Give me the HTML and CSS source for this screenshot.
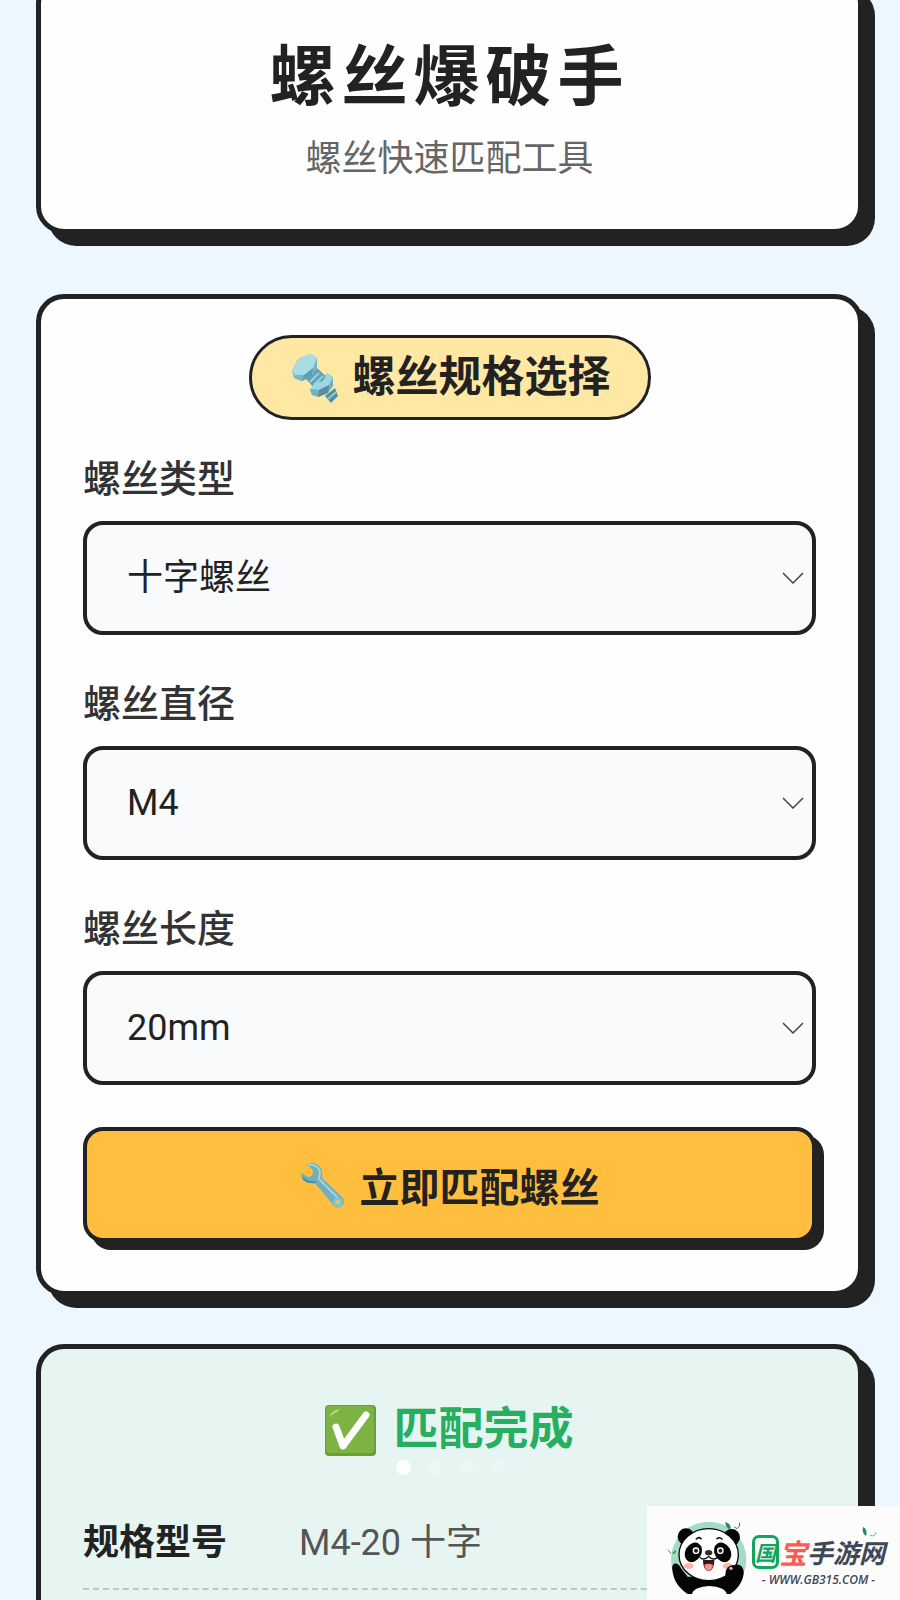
FILE: index.html
```html
<!DOCTYPE html>
<html lang="zh-CN">
<head>
<meta charset="UTF-8">
<meta name="viewport" content="width=device-width, initial-scale=1.0">
<title>螺丝爆破手</title>
<link rel="stylesheet" href="styles.css">
</head>
<body>
<div class="page">
	<header class="card header">
		<h1>螺丝爆破手</h1>
		<p class="subtitle">螺丝快速匹配工具</p>
	</header>

	<form class="card picker">
		<h2 class="pill">
			<svg class="icon-bolt" viewBox="0 0 54 54" aria-hidden="true">
				<path d="M20 28 31 17 41 26 29 38z" fill="#5fa3b5"/>
				<path d="M24 31l9-9M28 34l9-9" stroke="#9ad0dc" stroke-width="2"/>
				<path d="M39 45 49 37 52 45 45 52z" fill="#4a92a5"/>
				<path d="M42 48l8-7" stroke="#8cc8d5" stroke-width="2"/>
				<path d="M6 20 12 8 24 3 31 7 31 17 25 26 15 30 8 27z" fill="#78b5c6"/>
				<path d="M6 20 12 8 24 3 31 7 27 17 18 24 9 24z" fill="#a9dce5"/>
				<path d="M18 24 27 17 26 25 16 30z" fill="#5c9fb2"/>
				<path d="M24 39 29 33 38 30 41 22 47 26 47 35 42 42 32 46 26 44z" fill="#70afc0"/>
				<path d="M24 38 29 32 37 30 41 22 47 26 43 34 33 39z" fill="#9fd7e1"/>
				<path d="M33 39 43 34 42 42 32 46z" fill="#558fa3"/>
			</svg>
			<span>螺丝规格选择</span>
		</h2>

		<div class="field">
			<label for="type">螺丝类型</label>
			<div class="select-box">
				<select id="type">
					<option>十字螺丝</option>
				</select>
				<svg class="arrow" viewBox="0 0 22 12" aria-hidden="true"><path d="M1 1l10 10L21 1"/></svg>
			</div>
		</div>
		<div class="field">
			<label for="diameter">螺丝直径</label>
			<div class="select-box">
				<select id="diameter">
					<option>M4</option>
				</select>
				<svg class="arrow" viewBox="0 0 22 12" aria-hidden="true"><path d="M1 1l10 10L21 1"/></svg>
			</div>
		</div>
		<div class="field">
			<label for="length">螺丝长度</label>
			<div class="select-box">
				<select id="length">
					<option>20mm</option>
				</select>
				<svg class="arrow" viewBox="0 0 22 12" aria-hidden="true"><path d="M1 1l10 10L21 1"/></svg>
			</div>
		</div>

		<button type="button" class="match-btn">
			<svg class="icon-wrench" viewBox="0 0 48 48" aria-hidden="true">
				<path d="M6 4C11 1 18 2 21 7C23 11 22 14 22 17L42 36A6 6 0 0 1 34 45L15 22C10 23 5 22 2 18C1 16 1 14 2 12L8 16C11 16 13 14 13 11C13 8 10 6 6 4z" fill="#6fb0bf"/>
				<path d="M8 4c6-1 11 2 12 7l-1 7 20 20" fill="none" stroke="#a5d4d8" stroke-width="2"/>
				<path d="M3 17c4 4 8 5 13 4" fill="none" stroke="#4a8fa6" stroke-width="2"/>
				<circle cx="38" cy="41" r="5" fill="#8dc0c6"/>
				<circle cx="38" cy="41" r="2" fill="#efc258"/>
			</svg>
			<span>立即匹配螺丝</span>
		</button>
	</form>

	<section class="card result">
		<h2 class="done">
			<svg class="icon-check" viewBox="0 0 51 51" aria-hidden="true">
				<rect width="51" height="51" rx="4" fill="#689f38"/>
				<rect x="1" y="1" width="48" height="47" rx="3" fill="#7cb342"/>
				<path d="M5 12c1-5 4-7 10-8l-3 3c-3 1-5 3-7 5z" fill="#b5d98c"/>
				<path d="M11 22L18 41L41 10" fill="none" stroke="#fff" stroke-width="7" stroke-linecap="round" stroke-linejoin="round"/>
			</svg>
			<span>匹配完成</span>
			<span class="dots"><i class="dot on"></i><i class="dot"></i><i class="dot"></i><i class="dot"></i></span>
		</h2>
		<dl class="row">
			<dt>规格型号</dt>
			<dd>M4-20 十字</dd>
		</dl>
	</section>
</div>

<aside class="site">
	<svg class="panda" viewBox="0 0 240 222" aria-hidden="true">
		<circle cx="125" cy="118" r="113" fill="#a3dcc2"/>
		<path d="M16 150C12 125 34 125 42 145L62 170H185L200 135C220 128 232 142 230 162C226 190 208 210 190 222H62C36 204 20 184 16 150z" fill="#050505"/>
		<circle cx="57" cy="50" r="25" fill="#050505"/>
		<circle cx="194" cy="52" r="25" fill="#050505"/>
		<ellipse cx="125" cy="104" rx="89" ry="78" fill="#fff" stroke="#050505" stroke-width="4"/>
		<ellipse cx="79" cy="97" rx="24" ry="31" transform="rotate(30 79 97)" fill="#050505"/>
		<ellipse cx="167" cy="97" rx="24" ry="31" transform="rotate(-30 167 97)" fill="#050505"/>
		<circle cx="87" cy="92" r="10" fill="#fff"/><circle cx="87" cy="92" r="6" fill="#222"/>
		<circle cx="160" cy="92" r="10" fill="#fff"/><circle cx="160" cy="92" r="6" fill="#222"/>
		<path d="M88 57q7-7 14-1M150 56q8-6 15 1" fill="none" stroke="#111" stroke-width="5" stroke-linecap="round"/>
		<ellipse cx="125" cy="98" rx="11" ry="8" fill="#3b2a2a"/>
		<path d="M100 113q12 10 25-4q12 14 26 4" fill="none" stroke="#111" stroke-width="4" stroke-linecap="round"/>
		<path d="M108 120h34c0 20-7 33-17 33s-17-13-17-33z" fill="#35171a"/>
		<path d="M112 135q13-8 26 0c-2 12-7 17-13 17s-11-5-13-17z" fill="#ff8f86"/>
		<ellipse cx="65" cy="138" rx="15" ry="9" fill="#ffb3a8"/>
		<ellipse cx="182" cy="138" rx="15" ry="9" fill="#ffb3a8"/>
		<ellipse cx="199" cy="161" rx="24" ry="26" fill="#050505"/>
		<circle cx="192" cy="145" r="5" fill="#ffb3a8"/>
		<ellipse cx="127" cy="224" rx="52" ry="26" fill="#fff"/>
		<path d="M175 6c14 5 18 12 14 22c-9-3-14-11-14-22zM14 102l12-12q3 10-12 12z" fill="#1f8a63"/>
		<path d="M202 21l8 5q10-6 8-18M2 90l10 10" fill="none" stroke="#2b7d61" stroke-width="3"/>
	</svg>
	<div class="brand">
		<p class="brand-name"><span class="guo">国</span><span class="bao">宝</span>手游网</p>
		<p class="brand-url">- WWW.GB315.COM -</p>
		<svg class="leaf" viewBox="0 0 15 12" aria-hidden="true">
			<path d="M1 1C5 3 5 7 4 10C1 8 0 5 1 1z" fill="#1f8a63"/>
			<path d="M8 9l3 1q3-1 3-4" fill="none" stroke="#7fb5a0"/>
		</svg>
	</div>
</aside>
</body>
</html>
```
FILE: styles.css
```css
*{
	box-sizing: border-box;
	margin: 0;
	padding: 0;
}
body{
	background-color: #ecf7ff;
	color: #222;
	font-family: Roboto, "Noto Sans CJK SC", sans-serif;
}
.page{
	height: 100vh;
	overflow: hidden;
	padding: 0 37px 0 36px;
}
.card{
	background-color: #fefefe;
	border: 5px solid #222;
	border-radius: 28px;
	box-shadow: 12px 12px 0 #222;
	padding: 36px 42px 49px;
}

/* header */
.header{
	margin-top: -24px;
	margin-bottom: 60px;
	padding: 57px 42px 45px;
	text-align: center;
}
h1{
	font-size: 66px;
	line-height: 80px;
	letter-spacing: 6px;
}
.subtitle{
	margin-top: 16px;
	font-size: 36px;
	line-height: 50px;
	color: #666;
}

/* form */
.picker{
	display: flex;
	flex-direction: column;
	margin-bottom: 48px;
}
.pill{
	display: flex;
	align-items: center;
	align-self: center;
	gap: 13px;
	margin-bottom: 32px;
	padding: 0 37px 0 34px;
	border: 3px solid #222;
	border-radius: 43px;
	background-color: #ffe8a3;
	font-size: 43px;
	line-height: 79px;
}
.icon-bolt{
	width: 54px;
	height: 54px;
}
.field{
	margin-bottom: 42px;
}
.field label{
	display: block;
	margin-bottom: 16px;
	padding-top: 1px;
	font-size: 38px;
	font-weight: 500;
	line-height: 52px;
	color: #333;
}
.select-box{
	position: relative;
}
.select-box select{
	display: block;
	width: 100%;
	height: 114px;
	padding: 0 40px;
	border: 4px solid #222;
	border-radius: 20px;
	background-color: #f9fafc;
	color: #222;
	font-family: inherit;
	font-size: 36px;
	appearance: none;
}
.arrow{
	position: absolute;
	right: 12px;
	top: 51px;
	width: 22px;
	height: 12px;
	fill: none;
	stroke: #444;
	stroke-width: 1.5;
	pointer-events: none;
}
.match-btn{
	display: flex;
	align-items: center;
	justify-content: center;
	gap: 12px;
	height: 115px;
	border: 4px solid #222;
	border-radius: 20px;
	background-color: #ffbe3d;
	box-shadow: 8px 8px 0 #222;
	color: #222;
	font-family: inherit;
	font-size: 40px;
	font-weight: bold;
	cursor: pointer;
}
.icon-wrench{
	width: 48px;
	height: 48px;
}

/* result */
.result{
	min-height: 600px;
	padding-top: 51px;
	background-color: #e6f5f1;
}
.done{
	position: relative;
	display: flex;
	align-items: center;
	justify-content: center;
	gap: 17px;
	font-size: 45px;
	line-height: 60px;
	color: #27ae60;
}
.icon-check{
	width: 51px;
	height: 51px;
}
.dots{
	position: absolute;
	top: 60px;
	left: 50%;
	display: flex;
	gap: 16px;
	margin-left: -54px;
}
.dot{
	width: 15px;
	height: 15px;
	border-radius: 50%;
	background-color: #fff;
	opacity: .2;
}
.dot.on{
	opacity: 1;
}
.row{
	display: flex;
	margin-top: 38px;
	padding: 20px 0;
	border-bottom: 2px dashed #bcc6c3;
	font-size: 36px;
	line-height: 50px;
}
.row dt{
	width: 216px;
	font-weight: bold;
}
.row dd{
	color: #555;
}

/* site badge */
.site{
	position: fixed;
	right: 0;
	bottom: 0;
	display: flex;
	gap: 5px;
	width: 253px;
	height: 94px;
	padding: 14px 0 0 20px;
	background-color: #fcfcfc;
}
.panda{
	width: 80px;
	height: 74px;
}
.brand{
	position: relative;
	padding-top: 14px;
	font-family: "Noto Sans CJK SC", sans-serif;
	font-weight: bold;
	color: #3f4757;
}
.brand-name{
	display: flex;
	align-items: center;
	font-size: 26px;
	font-style: italic;
	line-height: 36px;
}
.guo{
	width: 27px;
	border: 3px solid #12a55c;
	border-radius: 7px;
	font-size: 21px;
	line-height: 28px;
	color: #12a55c;
}
.bao{
	font-size: 28px;
	color: #ff5a52;
}
.brand-url{
	font-family: "Open Sans", sans-serif;
	font-size: 12px;
	font-style: italic;
	font-weight: 600;
	line-height: 20px;
	text-align: center;
}
.leaf{
	position: absolute;
	top: 6px;
	right: 8px;
	width: 15px;
	height: 12px;
}
```
